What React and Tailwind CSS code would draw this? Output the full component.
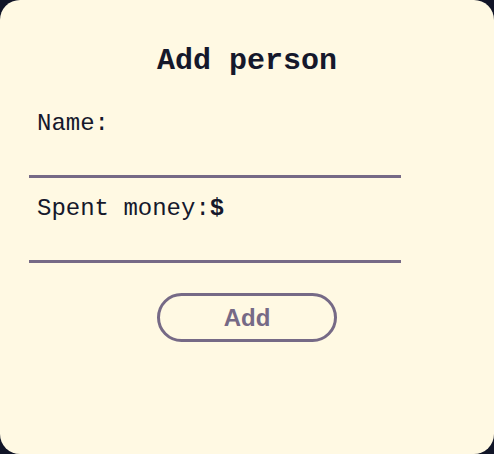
import { useState } from "react";

function AddPerson()
{
    const [name, setName] = useState("");
    const [money, setMoney] = useState("");

    return (
        <div className="w-full h-full bg-[#fff9e3] rounded-[20px] flex flex-col items-center pt-[39px] font-['Liberation_Mono',monospace] text-[#15182b]">
            <h1 className="text-[30px] leading-[45px] font-bold">Add person</h1>
            <form className="self-start ml-[29px] w-[372px] mt-[22px] flex flex-col" onSubmit={(e) => e.preventDefault()}>
                <label className="pl-2 text-[24px] leading-[36px]">Name:</label>
                <input
                    className="h-[36px] bg-transparent border-b-[3px] border-[#766a86] outline-none px-2 text-[24px]"
                    value={name}
                    onChange={(e) => setName(e.target.value)}
                />
                <label className="pl-2 mt-[13px] text-[24px] leading-[36px]">Spent money:<b>$</b></label>
                <input
                    className="h-[36px] bg-transparent border-b-[3px] border-[#766a86] outline-none px-2 text-[24px]"
                    value={money}
                    onChange={(e) => setMoney(e.target.value)}
                />
            </form>
            <button className="mt-[30px] w-[180px] h-[49px] rounded-full border-[3px] border-[#766a86] text-[#766a86] font-['Liberation_Sans',sans-serif] font-bold text-[24px] leading-none">
                Add
            </button>
        </div>
    );
}

export default function App()
{
    return (
        <div className="w-[494px] h-[454px] bg-[#111527]">
            <AddPerson />
        </div>
    );
}
